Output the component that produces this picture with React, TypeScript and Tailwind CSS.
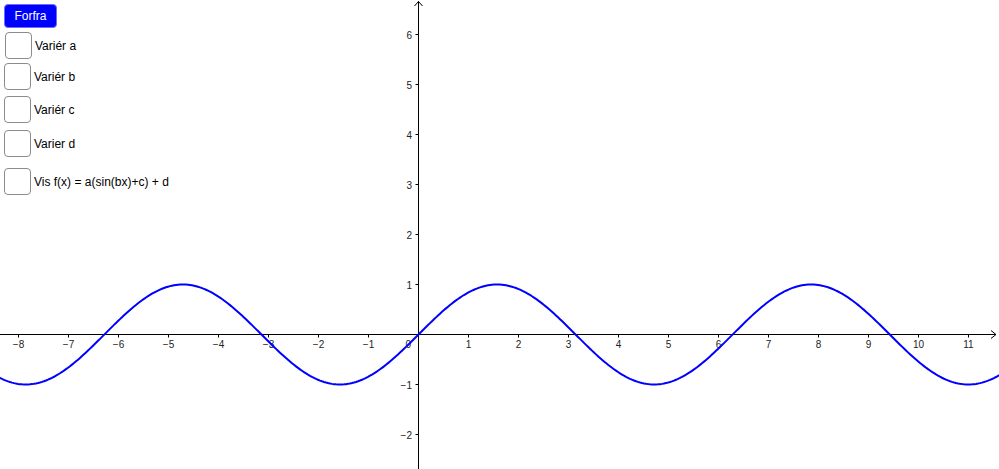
import React from "react";

const OX = 418.5;
const OY = 334.5;
const U = 50;

function curvePath() {
  const pts: string[] = [];
  for (let px = -2; px <= 1002; px += 2) {
    const y = OY - U * Math.sin((px - OX) / U);
    pts.push(`${px === -2 ? "M" : "L"}${px},${y.toFixed(2)}`);
  }
  return pts.join(" ");
}

function Graph() {
  const xs = [-8, -7, -6, -5, -4, -3, -2, -1, 1, 2, 3, 4, 5, 6, 7, 8, 9, 10, 11];
  const ys = [-2, -1, 1, 2, 3, 4, 5, 6];
  const fmt = (n: number) => (n < 0 ? `\u2212${-n}` : `${n}`);
  return (
    <svg className="absolute inset-0" width={999} height={469} viewBox="0 0 999 469">
      <g stroke="#000" strokeWidth={1} fill="none">
        <line x1={0} y1={OY} x2={996} y2={OY} />
        <line x1={OX} y1={469} x2={OX} y2={1} />
        <polyline points={`${OX - 4},6 ${OX},1.5 ${OX + 4},6`} />
        <polyline points={`991,${OY - 4} 996,${OY} 991,${OY + 4}`} />
        {xs.map((n) => (
          <line key={`xt${n}`} x1={OX + n * U} y1={OY} x2={OX + n * U} y2={OY + 3} />
        ))}
        {ys.map((n) => (
          <line key={`yt${n}`} x1={OX - 3} y1={OY - n * U} x2={OX} y2={OY - n * U} />
        ))}
      </g>
      <g fill="#222" fontSize={10} fontFamily="'Liberation Sans', Arial, sans-serif">
        {xs.map((n) => (
          <text key={`xl${n}`} x={OX + n * U} y={348} textAnchor="middle">
            {fmt(n)}
          </text>
        ))}
        {ys.map((n) => (
          <text key={`yl${n}`} x={412} y={OY - n * U + 4} textAnchor="end">
            {fmt(n)}
          </text>
        ))}
        <text x={411} y={348} textAnchor="end">0</text>
      </g>
      <path d={curvePath()} stroke="#0000ff" strokeWidth={2} fill="none" />
    </svg>
  );
}

function Check({ label, className }: { label: string; className: string }) {
  return (
    <div className={`flex items-center ${className}`}>
      <div className="w-[27px] h-[27px] rounded-[4px] border border-[#8c8c8c] bg-white" />
      <span className="ml-[3px] text-[12px] text-black">{label}</span>
    </div>
  );
}

export default function App() {
  return (
    <div className="relative w-[999px] h-[469px] bg-white overflow-hidden font-['Liberation_Sans',Arial,sans-serif]">
      <Graph />
      <div className="absolute left-0 top-0 flex flex-col pl-[4px] pt-[4px]">
        <button className="w-[53px] h-[24px] rounded-[4px] bg-[#0000ff] border border-[#6b6bff] text-white text-[12px] leading-none">
          Forfra
        </button>
        <Check label="Variér a" className="mt-[4px] ml-[1px]" />
        <Check label="Variér b" className="mt-[4px]" />
        <Check label="Variér c" className="mt-[6px]" />
        <Check label="Varier d" className="mt-[7px]" />
        <Check label="Vis f(x) = a(sin(bx)+c) + d" className="mt-[11px]" />
      </div>
    </div>
  );
}
